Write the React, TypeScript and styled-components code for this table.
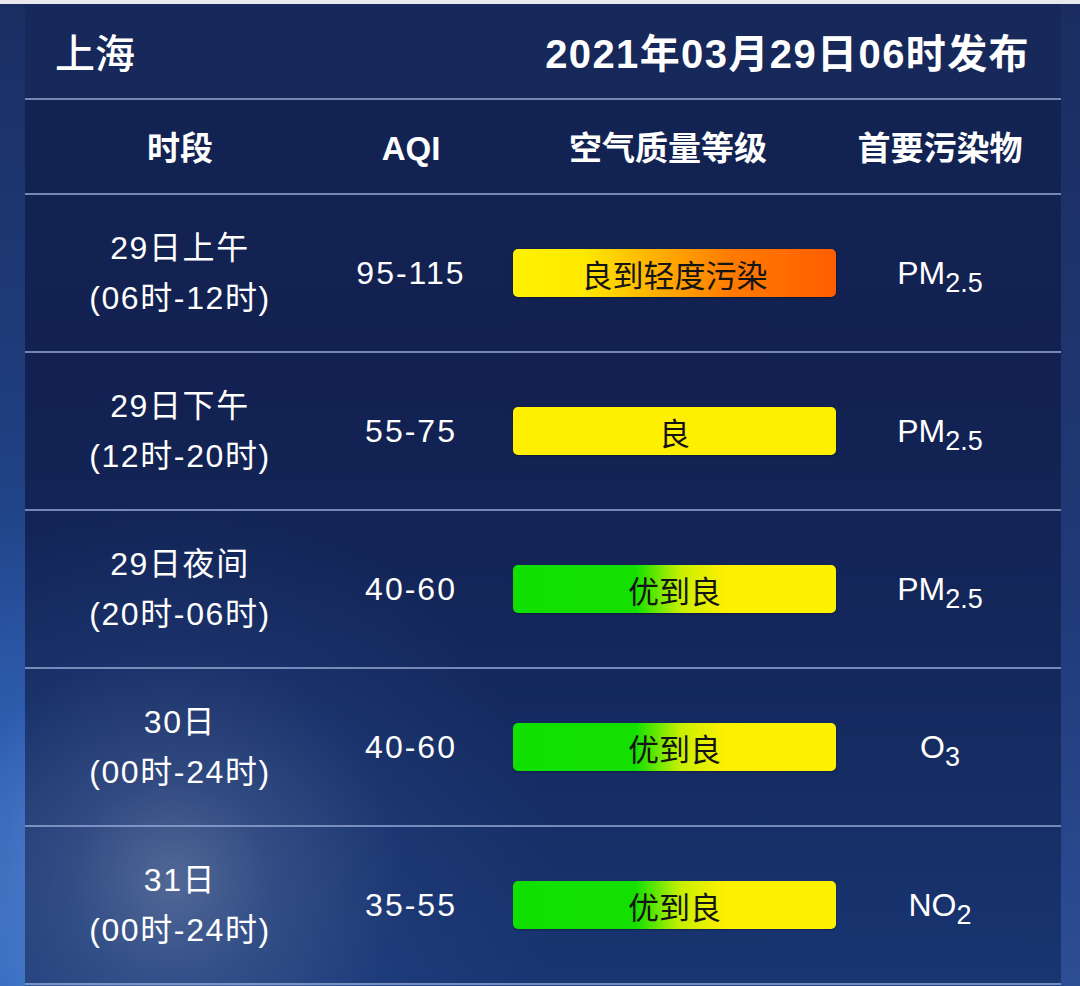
import React from 'react'
import styled, { createGlobalStyle } from 'styled-components'

const GlobalStyle = createGlobalStyle`
  html, body {
    margin: 0;
    padding: 0;
    background: #142452;
  }
  body {
    font-family: 'Liberation Sans', 'Noto Sans CJK SC', sans-serif;
  }
`

const Page = styled.div`
  width: 1080px;
  height: 986px;
  overflow: hidden;
  color: #ffffff;
  background:
    radial-gradient(circle at 172px 880px, rgba(200, 222, 252, 0.5) 0, rgba(140, 175, 232, 0.36) 100px, rgba(70, 120, 205, 0.18) 230px, rgba(40, 90, 180, 0) 380px),
    linear-gradient(180deg, #1b2e62 0%, #1f3f80 45%, #2a5cb0 80%, #2f68bd 100%) left top / 25px 100% no-repeat,
    linear-gradient(180deg, #1b2d60 0%, #203a78 60%, #2d4d95 100%) right top / 19px 100% no-repeat,
    linear-gradient(180deg, #17285a 0%, #152657 40%, #19316a 70%, #1f4488 100%);
`

const TopStrip = styled.div`
  height: 4px;
  background: #e9e9ee;
`

const TitleBar = styled.header`
  height: 94px;
  display: flex;
  align-items: center;
  justify-content: space-between;
  padding: 0 50px 0 55px;
`

const City = styled.h1`
  margin: 0;
  font-size: 40px;
  font-weight: 500;
  font-family: 'Noto Sans CJK SC', sans-serif;
`

const Issued = styled.div`
  font-size: 40px;
  font-weight: 700;
  letter-spacing: 1.4px;
`

const Table = styled.div`
  margin-left: 25px;
  width: 1036px;
  background: rgba(12, 24, 68, 0.32);
  border-top: 2px solid rgba(150, 170, 215, 0.75);
`

const Row = styled.div<{ $head?: boolean }>`
  display: grid;
  grid-template-columns: 310px 152px 376px 154px 1fr;
  align-items: center;
  height: ${(p) => (p.$head ? '93px' : '156px')};
  border-bottom: 2px solid rgba(150, 170, 215, 0.75);
  font-size: ${(p) => (p.$head ? '33px' : '31px')};
  font-weight: ${(p) => (p.$head ? 700 : 400)};
`

const Cell = styled.div<{ $shift?: number }>`
  display: flex;
  justify-content: center;
  line-height: 50px;
  white-space: nowrap;
  margin-left: ${(p) => (p.$shift ? `${p.$shift}px` : '0')};
`

const HeadCell = styled(Cell)`
  padding-top: 4px;
`

const Period = styled(Cell)`
  flex-direction: column;
  align-items: center;
  font-size: 32px;
  letter-spacing: 1.6px;
`

const Aqi = styled(Cell)`
  letter-spacing: 2px;
  font-size: 32px;
`

const Level = styled.div<{ $fill: string }>`
  margin-left: 26px;
  width: 323px;
  height: 48px;
  border-radius: 5px;
  background: ${(p) => p.$fill};
  color: #141414;
  display: flex;
  align-items: center;
  justify-content: center;
  font-family: 'Noto Sans CJK SC', sans-serif;
  font-size: 31px;
  box-shadow: 0 1px 2px rgba(0, 0, 0, 0.3);
`

const Pollutant = styled.div`
  text-align: center;
  white-space: nowrap;
  font-size: 32px;
  line-height: 50px;
  sub {
    font-size: 27px;
    vertical-align: -8px;
    line-height: 0;
  }
`

const fills = {
  yellowOrange: 'linear-gradient(90deg, #fff200 0%, #ffe900 22%, #ffae00 45%, #ff7a00 68%, #ff5e00 100%)',
  yellow: '#fff000',
  greenYellow: 'linear-gradient(90deg, #10e000 0%, #14e000 38%, #c8f000 52%, #fff000 66%, #fff200 100%)',
}

type Forecast = {
  day: string
  hours: string
  aqi: string
  level: string
  fill: string
  main: React.ReactNode
}

const rows: Forecast[] = [
  { day: '29日上午', hours: '(06时-12时)', aqi: '95-115', level: '良到轻度污染', fill: fills.yellowOrange, main: <>PM<sub>2.5</sub></> },
  { day: '29日下午', hours: '(12时-20时)', aqi: '55-75', level: '良', fill: fills.yellow, main: <>PM<sub>2.5</sub></> },
  { day: '29日夜间', hours: '(20时-06时)', aqi: '40-60', level: '优到良', fill: fills.greenYellow, main: <>PM<sub>2.5</sub></> },
  { day: '30日', hours: '(00时-24时)', aqi: '40-60', level: '优到良', fill: fills.greenYellow, main: <>O<sub>3</sub></> },
  { day: '31日', hours: '(00时-24时)', aqi: '35-55', level: '优到良', fill: fills.greenYellow, main: <>NO<sub>2</sub></> },
]

export default function App() {
  return (
    <>
      <GlobalStyle />
      <Page>
        <TopStrip />
        <TitleBar>
          <City>上海</City>
          <Issued>2021年03月29日06时发布</Issued>
        </TitleBar>
        <Table>
          <Row $head>
            <HeadCell>时段</HeadCell>
            <HeadCell>AQI</HeadCell>
            <HeadCell $shift={-14}>空气质量等级</HeadCell>
            <HeadCell>首要污染物</HeadCell>
          </Row>
          {rows.map((r, i) => (
            <Row key={i}>
              <Period>
                <span>{r.day}</span>
                <span>{r.hours}</span>
              </Period>
              <Aqi>{r.aqi}</Aqi>
              <div>
                <Level $fill={r.fill}>{r.level}</Level>
              </div>
              <Pollutant>{r.main}</Pollutant>
            </Row>
          ))}
        </Table>
      </Page>
    </>
  )
}
